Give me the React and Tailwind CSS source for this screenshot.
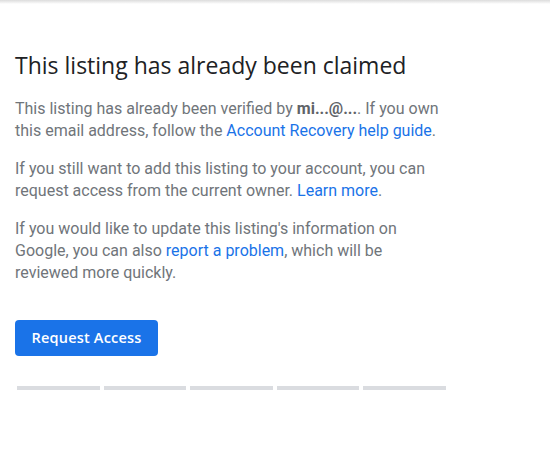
export default function App() {
  const bars = [0, 1, 2, 3, 4];
  return (
    <div className="relative h-[450px] w-[550px] overflow-hidden bg-white">
      {/* top edge shadow */}
      <div className="h-[4px] w-full bg-gradient-to-b from-[#dcdcdc] to-white" />

      <div className="px-[15px] pt-[46px]">
        <h1 className="text-[23px] leading-[30px] text-[#202124] font-['Open_Sans',sans-serif]">
          This listing has already been claimed
        </h1>

        <div className="mt-[18px] w-[428px] font-['Roboto',sans-serif] text-[16px] leading-[22px] text-[#70757a]">
          <p>
            This listing has already been verified by <b className="font-bold text-[#5f6368]">mi...@...</b>. If you own
            this email address, follow the <span className="text-[#1a73e8]">Account Recovery help guide</span>.
          </p>
          <p className="mt-4">
            If you still want to add this listing to your account, you can request access from the current owner.{" "}
            <span className="text-[#1a73e8]">Learn more</span>.
          </p>
          <p className="mt-4">
            If you would like to update this listing's information on Google, you can also{" "}
            <span className="text-[#1a73e8]">report a problem</span>, which will be reviewed more quickly.
          </p>
        </div>

        <button className="mt-[36px] flex h-[36px] w-[143px] items-center justify-center rounded-[4px] bg-[#1a73e8] font-['Open_Sans',sans-serif] text-[14.5px] font-semibold tracking-[0.2px] text-white">
          Request Access
        </button>

        <div className="mt-[30px] ml-[2px] flex gap-[4px]">
          {bars.map((i) => (
            <div key={i} className="h-[4px] w-[82.5px] bg-[#dadce0]" />
          ))}
        </div>
      </div>
    </div>
  );
}
